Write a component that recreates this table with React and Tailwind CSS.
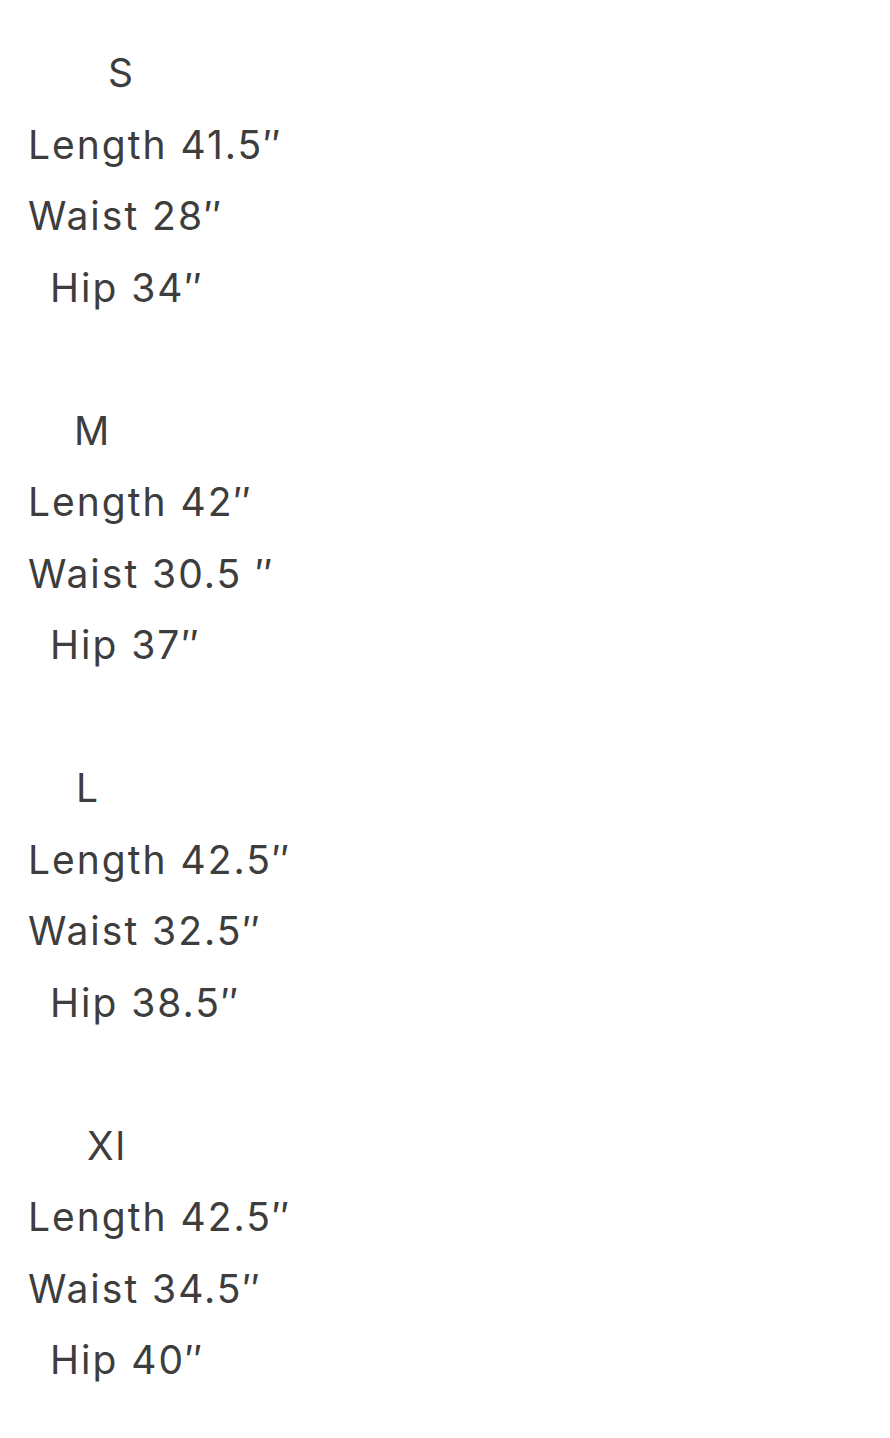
const sizes = [
  { name: "S", indent: "pl-[80px]", length: "41.5″", waist: "28″", hip: "34″" },
  { name: "M", indent: "pl-[46px]", length: "42″", waist: "30.5 ″", hip: "37″" },
  { name: "L", indent: "pl-[48px]", length: "42.5″", waist: "32.5″", hip: "38.5″" },
  { name: "Xl", indent: "pl-[59px]", length: "42.5″", waist: "34.5″", hip: "40″" },
]

export default function App() {
  return (
    <div className="w-[890px] h-[1438px] bg-white pt-[37px] pl-[28px] text-[39px] leading-[71.5px] tracking-[2px] text-[#3d3d3d] font-['Inter','Liberation_Sans',sans-serif]">
      {sizes.map((s) => (
        <div key={s.name}>
          <p className={s.indent}>{s.name}</p>
          <p>Length {s.length}</p>
          <p>Waist {s.waist}</p>
          <p className="pl-[22px]">Hip {s.hip}</p>
          <p>&nbsp;</p>
        </div>
      ))}
    </div>
  )
}
